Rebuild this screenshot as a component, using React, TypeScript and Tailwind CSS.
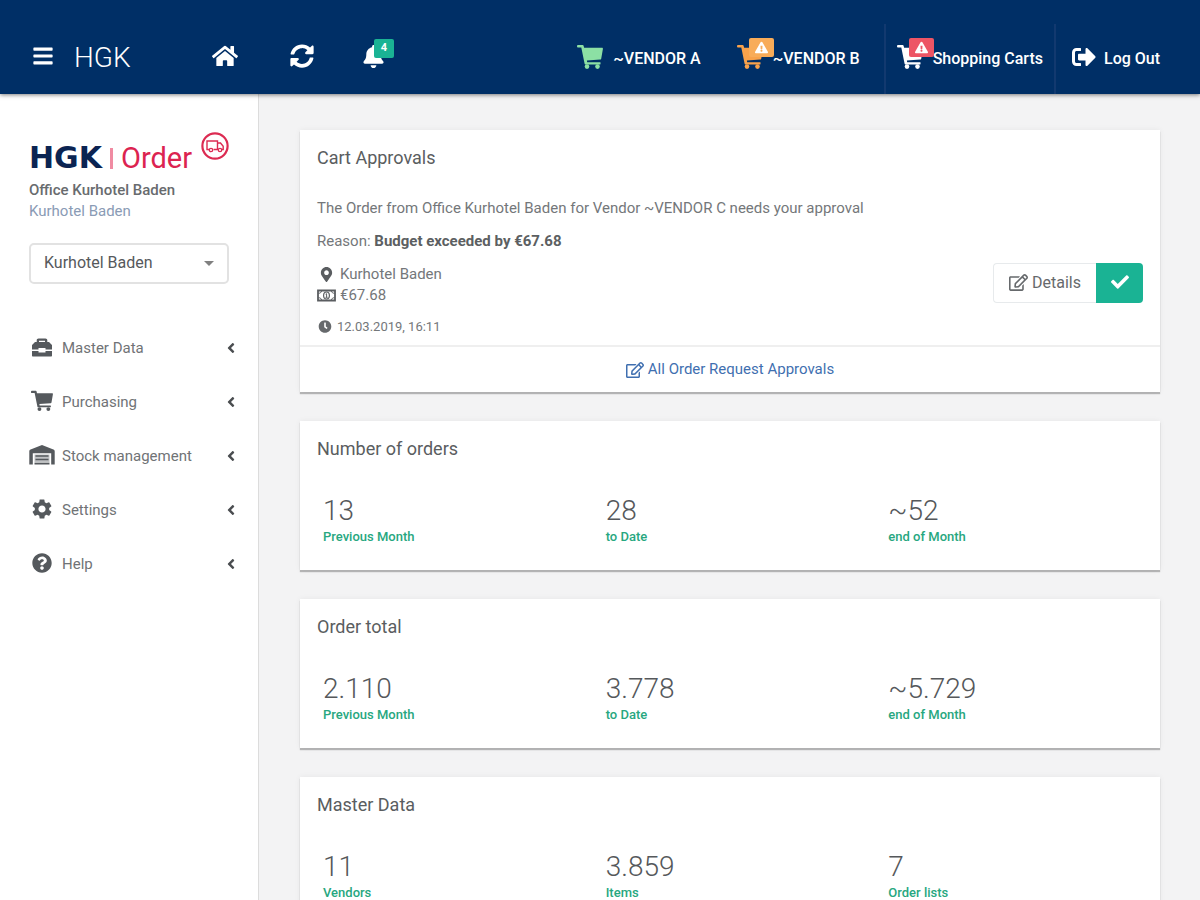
import type { ReactNode } from "react";
import type { IconType } from "react-icons";
import {
  FaAngleLeft,
  FaBars,
  FaBell,
  FaCheck,
  FaClock,
  FaExclamationTriangle,
  FaHome,
  FaMapMarkerAlt,
  FaQuestionCircle,
  FaRegEdit,
  FaSignOutAlt,
  FaSyncAlt,
} from "react-icons/fa";
import { MdSettings } from "react-icons/md";

type Stat = { value: string; label: string };
type IconProps = { className?: string };

function CartIcon({ className }: IconProps) {
  return (
    <svg viewBox="0 0 26 26" fill="currentColor" className={className}>
      <path d="M1 1h4.600c.5 0 .9.300 1 .800L7.100 3.800H25c.6 0 1 .5.900 1.100l-1.700 9.800c-.1.500-.5.900-1 .900l-13.300 1 .3 1.700h12.600c.6 0 .9.400.8.900l-.3 1.300H8.600c-.5 0-.9-.300-1-.800L4.300 3.600H1a1 1 0 0 1-1-1V2a1 1 0 0 1 1-1z" />
      <circle cx="10" cy="22.600" r="2.300" />
      <circle cx="20.500" cy="22.600" r="2.300" />
    </svg>
  );
}

function ToolboxIcon({ className }: IconProps) {
  return (
    <svg viewBox="0 0 22 22" fill="currentColor" className={className}>
      <path
        fillRule="evenodd"
        d="M7.500 2.500h7c1 0 1.800.8 1.800 1.800V6H18l3 3v4.500h-6.500V12h-7v1.500H1V9l3-3h1.700V4.300c0-1 .8-1.800 1.800-1.800zM8 4.800V6h6V4.800z"
      />
      <path d="M1 15h6.500v1.500h7V15H21v4.500c0 .6-.4 1-1 1H2c-.6 0-1-.4-1-1z" />
    </svg>
  );
}

function WarehouseIcon({ className }: IconProps) {
  return (
    <svg viewBox="0 0 26 22" className={className}>
      <path
        fill="currentColor"
        d="M13 1 1.600 5.400C.7 5.700.3 6.300.3 7.200V20.500h3.500V9.300h18.400v11.200h3.500V7.200c0-.9-.4-1.500-1.300-1.800z"
      />
      <path fill="#bfc1c3" d="M5.500 10.500h15v8h-15z" />
      <path fill="currentColor" d="M6.500 11.300h13v1.500h-13zm0 3.500h13v1.500h-13zM5.500 18.700h15v1.800h-15z" />
    </svg>
  );
}

function MoneyIcon({ className }: IconProps) {
  return (
    <svg viewBox="0 0 19 13" fill="none" stroke="currentColor" className={className}>
      <path d="M1 1.500h17v10H1z" strokeWidth="1.800" />
      <path d="M4.500 2c0 1.400-1.300 2.300-3 2.300M14.500 2c0 1.400 1.300 2.300 3 2.300M4.500 11c0-1.400-1.300-2.300-3-2.300M14.500 11c0-1.400 1.300-2.300 3-2.300" />
      <ellipse cx="9.500" cy="6.500" rx="2.900" ry="3.500" strokeWidth="1.200" />
      <path d="M8.600 5.200l1-.5v3.600M8.500 8.300h2.100" />
    </svg>
  );
}

const MENU: { label: string; icon: IconType; size: string }[] = [
  { label: "Master Data", icon: ToolboxIcon, size: "size-[22px]" },
  { label: "Purchasing", icon: CartIcon, size: "size-[22px]" },
  { label: "Stock management", icon: WarehouseIcon, size: "h-[22px] w-[26px]" },
  { label: "Settings", icon: MdSettings, size: "size-6" },
  { label: "Help", icon: FaQuestionCircle, size: "size-5" },
];

const STATS: { title: string; items: Stat[] }[] = [
  {
    title: "Number of orders",
    items: [
      { value: "13", label: "Previous Month" },
      { value: "28", label: "to Date" },
      { value: "~52", label: "end of Month" },
    ],
  },
  {
    title: "Order total",
    items: [
      { value: "2.110", label: "Previous Month" },
      { value: "3.778", label: "to Date" },
      { value: "~5.729", label: "end of Month" },
    ],
  },
  {
    title: "Master Data",
    items: [
      { value: "11", label: "Vendors" },
      { value: "3.859", label: "Items" },
      { value: "7", label: "Order lists" },
    ],
  },
];

function WarningBadge({ className }: { className: string }) {
  return (
    <span
      className={`absolute -top-1.5 left-3 flex h-[19px] w-[25px] items-center justify-center rounded-xs ${className}`}
    >
      <FaExclamationTriangle className="size-[13px] text-white" />
    </span>
  );
}

function Header() {
  return (
    <header className="relative z-10 flex bg-[#002f66] pt-6 text-white shadow-[0_1px_4px_rgba(0,0,0,0.5)]">
      <div className="flex h-[70px] flex-1 items-center pb-1.5 pl-8">
        <button type="button" aria-label="Menu" className="mr-5">
          <FaBars className="size-[22px]" />
        </button>
        <span className="w-[138px] pt-1 text-[28px] leading-8 font-light">
          HGK
        </span>
        <a href="#" aria-label="Home" className="mr-[52px]">
          <FaHome className="size-[26px]" />
        </a>
        <button type="button" aria-label="Refresh" className="mr-12">
          <FaSyncAlt className="size-6" />
        </button>
        <button type="button" aria-label="Notifications" className="relative">
          <FaBell className="size-[23px]" />
          <span className="absolute -top-1.5 left-3 flex h-[19px] w-5 items-center justify-center rounded-xs bg-[#1ab394] text-[11px] font-bold">
            4
          </span>
        </button>
      </div>
      <nav className="flex h-[70px] items-stretch pr-10 text-[16px] font-medium">
        <a href="#" className="mr-9 flex items-center">
          <CartIcon className="mr-2.5 mb-1 size-[26px] text-[#8ce0a4]" />
          ~VENDOR A
        </a>
        <a href="#" className="mr-6 flex items-center">
          <span className="relative mr-2.5 mb-1">
            <CartIcon className="size-[26px] text-[#f8a24b]" />
            <WarningBadge className="bg-[#f8ac59]" />
          </span>
          ~VENDOR B
        </a>
        <a
          href="#"
          className="flex items-center border-x-2 border-[#12396f] px-[11px]"
        >
          <span className="relative mr-2.5 mb-1">
            <CartIcon className="size-[26px]" />
            <WarningBadge className="bg-[#ed5565]" />
          </span>
          Shopping Carts
        </a>
        <a href="#" className="ml-4 flex items-center">
          <FaSignOutAlt className="mr-2 mb-1 size-6" />
          Log Out
        </a>
      </nav>
    </header>
  );
}

function Logo() {
  return (
    <div className="flex items-start justify-between">
      <div className="flex items-center pt-2 leading-9">
        <span className="font-['DejaVu_Sans',sans-serif] text-[30px] font-bold text-[#0b2452]">
          HGK
        </span>
        <span className="mx-2 h-[21px] w-[3px] bg-[#f08ba2]" />
        <span className="text-[29px] text-[#dc2350]">Order</span>
      </div>
      <svg viewBox="0 0 28 28" fill="none" stroke="#dc2b52" className="-ml-2 size-7">
        <circle cx="14" cy="14" r="12.600" strokeWidth="2.200" />
        <path
          d="M8 17.500H6V9h10.500v8.500h-4M16.500 11h3l2.700 3.300v3.200H21M16.500 17.500h.6"
          strokeWidth="1.400"
        />
        <circle cx="10" cy="18" r="1.700" strokeWidth="1.300" />
        <circle cx="19" cy="18" r="1.700" strokeWidth="1.300" />
      </svg>
    </div>
  );
}

function Sidebar() {
  return (
    <aside className="w-[259px] shrink-0 border-r border-[#dcdcdc] bg-white px-[29px] pt-[38px]">
      <Logo />
      <p className="mt-1 text-[15px] leading-[21px] font-medium text-[#686b6e]">
        Office Kurhotel Baden
      </p>
      <p className="text-[15px] leading-[21px] text-[#8a9bb5]">
        Kurhotel Baden
      </p>
      <div className="relative mt-[21px]">
        <select
          aria-label="Location"
          className="h-[41px] w-full appearance-none rounded-[5px] border-2 border-[#e2e2e2] bg-white pb-0.5 pl-[13px] text-[16px] text-[#56595c]"
        >
          <option>Kurhotel Baden</option>
        </select>
        <span className="pointer-events-none absolute top-[18px] right-[15px] border-x-5 border-t-5 border-x-transparent border-t-[#808080]" />
      </div>
      <ul className="mt-[37px]">
        {MENU.map(({ label, icon: Icon, size }) => (
          <li key={label}>
            <a
              href="#"
              className="flex h-[54px] items-center text-[15px] text-[#707376]"
            >
              <span className="mr-[7px] mb-0.5 flex w-[26px] justify-center text-[#55595d]">
                <Icon className={size} />
              </span>
              {label}
              <FaAngleLeft className="-mr-2.5 ml-auto size-4 text-[#4a4d50]" />
            </a>
          </li>
        ))}
      </ul>
    </aside>
  );
}

function Card({ title, children }: { title: string; children: ReactNode }) {
  return (
    <section className="bg-white shadow-[0_2px_1px_rgba(0,0,0,0.25),0_0_6px_rgba(0,0,0,0.06)]">
      <h2 className="px-[17px] pt-4 text-[18px] leading-6 text-[#5a5d60]">
        {title}
      </h2>
      {children}
    </section>
  );
}

function ApprovalCard() {
  return (
    <Card title="Cart Approvals">
      <div className="flex items-end justify-between px-[17px] pt-7 pb-2 text-[15px] leading-[21px] text-[#74777a]">
        <div>
          <p>
            The Order from Office Kurhotel Baden for Vendor ~VENDOR C needs your
            approval
          </p>
          <p className="mt-3">
            Reason:{" "}
            <strong className="font-bold text-[#5c5f62]">
              Budget exceeded by €67.68
            </strong>
          </p>
          <p className="mt-3 flex items-center">
            <FaMapMarkerAlt className="mr-1 w-[19px] text-[#5a5d60]" />
            Kurhotel Baden
          </p>
          <p className="flex items-center">
            <MoneyIcon className="mr-1 h-[13px] w-[19px] text-[#5a5d60]" />
            €67.68
          </p>
          <p className="mt-2.5 flex items-center text-[13px]">
            <FaClock className="mr-1 w-4 text-[#66696c]" />
            12.03.2019, 16:11
          </p>
        </div>
        <div className="mb-[34px] flex h-10">
          <button
            type="button"
            className="flex items-center rounded-l border border-r-0 border-[#e7eaec] px-[15px] pb-0.5 text-[16px] text-[#66696c]"
          >
            <FaRegEdit className="mr-1 size-[19px]" />
            Details
          </button>
          <button
            type="button"
            aria-label="Approve"
            className="flex w-[47px] items-center justify-center rounded-r bg-[#1ab394] pb-0.5 text-white"
          >
            <FaCheck className="size-[18px]" />
          </button>
        </div>
      </div>
      <a
        href="#"
        className="flex h-[47px] items-center justify-center border-t-2 border-[#efefef] text-[15px] text-[#3f6fb0]"
      >
        <FaRegEdit className="mr-1 size-[18px]" />
        All Order Request Approvals
      </a>
    </Card>
  );
}

function StatCard({ title, items }: { title: string; items: Stat[] }) {
  return (
    <Card title={title}>
      <dl className="grid grid-cols-3 px-1.5 pt-8 pb-[25px]">
        {items.map((item) => (
          <div key={item.label} className="flex flex-col-reverse px-[17px]">
            <dt className="text-[13px] leading-4 font-medium text-[#27a780]">
              {item.label}
            </dt>
            <dd className="text-[28px] leading-9 font-light text-[#55585b]">
              {item.value}
            </dd>
          </div>
        ))}
      </dl>
    </Card>
  );
}

export default function App() {
  return (
    <div className="flex h-screen flex-col overflow-hidden font-[Roboto,sans-serif]">
      <Header />
      <div className="flex min-h-0 flex-1 bg-[#f3f3f4]">
        <Sidebar />
        <main className="flex min-w-0 flex-1 flex-col gap-[29px] overflow-hidden pt-9 pr-10 pl-[41px]">
          <ApprovalCard />
          {STATS.map((stat) => (
            <StatCard key={stat.title} title={stat.title} items={stat.items} />
          ))}
        </main>
      </div>
    </div>
  );
}
